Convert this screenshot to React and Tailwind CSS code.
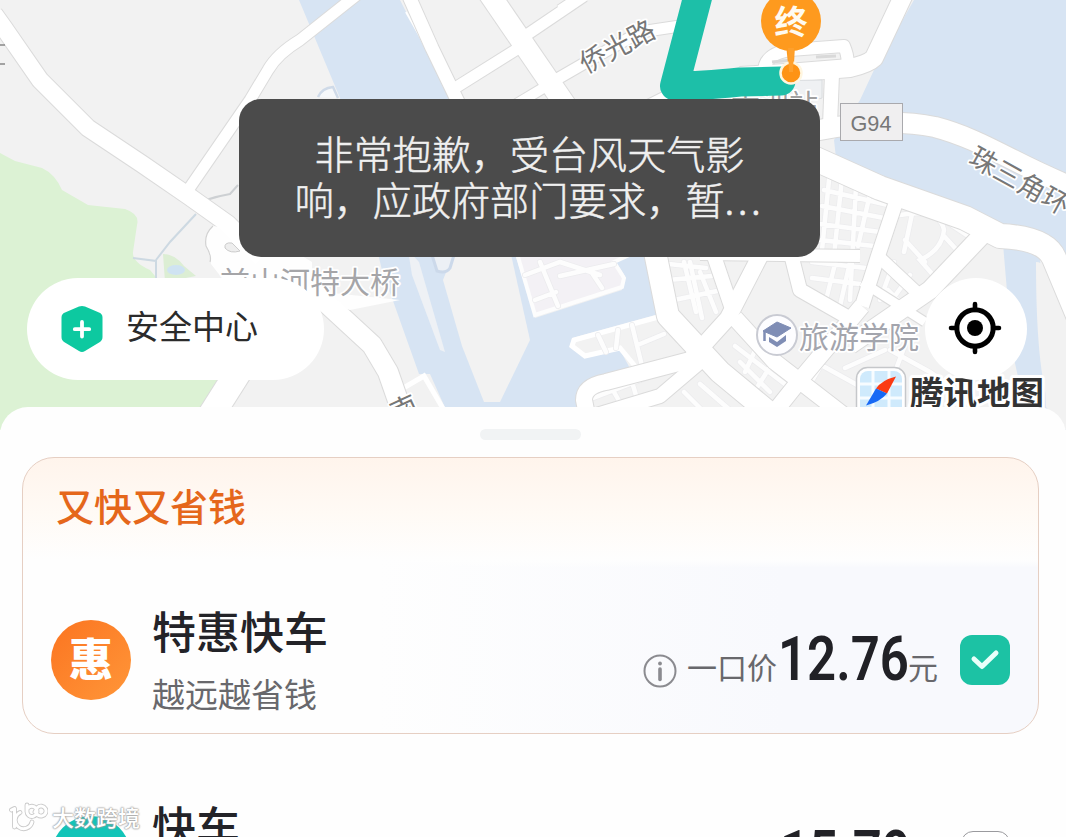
import React from "react";

const ROADS = [
  // [path, width]
  ["M-6 14 L4 28 L40 80 L88 128 L142 164 L190 197 L228 224 L262 258", 17],
  ["M358 -6 L300 40 Q277 54 268 70 L250 100 L184 196", 11],
  ["M308 286 L372 345 L388 372 L402 412", 20],
  ["M246 360 L208 420", 26],
  ["M408 -6 L432 48 L462 110", 13],
  ["M488 -8 L566 106", 21],
  ["M522 38 L584 -4", 11],
  ["M455 88 L522 46", 11],
  ["M545 86 L590 60 L640 32 L680 26", 11],
  ["M510 108 L550 84", 10],
  ["M560 10 L584 -6", 10],
  ["M640 110 L700 80", 12],
  ["M906 -10 L874 58 Q868 64 850 68 L800 72 L740 76", 18],
  ["M764 72 Q764 54 790 50 L844 46 Q850 60 846 70", 12],
  ["M832 74 L830 125", 14],
  ["M800 134 Q880 116 935 127 C985 140 1020 168 1080 190", 20],
  ["M800 152 L880 188 L965 218 L1000 236 Q1045 238 1054 258 L1080 320", 24],
  ["M898 196 L878 256 L862 306", 14],
  ["M655 252 L668 316 L720 372 L790 430", 22],
  ["M590 430 L584 400 Q584 386 606 382 L690 360 L728 318 L760 256", 16],
  ["M700 362 L660 396 L580 420", 14],
  ["M712 250 L733 312", 14],
  ["M700 254 L860 256", 12],
  ["M862 306 L800 380 L760 430", 16],
  ["M878 256 L925 300", 12],
  ["M862 282 L925 322", 9],
  ["M985 232 L930 290 L850 345", 18],
  ["M790 250 L800 290 L856 322", 14],
  ["M735 318 L775 362 L850 420", 16],
];

const MINOR = [
  "M650 262 L706 268 M668 280 L712 276 M674 300 L722 290 M690 262 L702 318 M684 262 L696 312 M700 272 L716 312",
  "M540 262 L558 306 M525 275 L560 262 L600 275 M535 300 L556 292 M560 276 L614 264 M590 270 L602 288",
  "M598 335 L606 352 M618 330 L616 348 M632 325 L642 366 M640 344 L664 334",
  "M588 400 L672 368 M614 392 L622 406 M632 382 L638 402 M684 392 L700 408 M700 384 L730 410",
  "M830 170 L822 250 M842 178 L834 256 M856 186 L850 300 M870 194 L858 246 M824 190 L888 205 M822 206 L884 218 M820 224 L880 232 M820 240 L874 246 M812 262 L866 268 M812 278 L860 284 M826 300 L836 260 M840 306 L850 262",
  "M900 215 Q940 208 944 230 Q942 250 920 260 L934 276 M912 214 L904 252 M938 216 L968 236 M944 236 L955 248 M905 240 L925 262",
  "M894 262 L880 300 M910 275 L892 300 M888 290 L908 310 M880 318 L910 306",
  "M735 346 L790 388 M740 362 L770 392 M760 340 L745 372 M778 354 L758 386 M812 360 L870 392 M830 350 L810 384 M845 368 L885 350 M890 350 L930 372 L960 392 M905 345 L895 372",
];

function MapArt() {
  return (
    <svg
      className="absolute left-0 top-0"
      width="1066"
      height="430"
      viewBox="0 0 1066 430"
      fontFamily="'Noto Sans CJK SC', sans-serif"
    >
      <rect width="1066" height="430" fill="#f2f2f2" />
      {/* park */}
      <path
        d="M0 153 L15 161 L42 168 Q55 174 62 190 L88 205 L125 209 Q140 214 137 225 L133 252 Q132 262 150 270 L225 360 L198 430 L0 430Z"
        fill="#dcf2d4"
      />
      <path d="M163 254 Q175 254 184 266 L196 276 L165 282Z" fill="#dceed4" />
      <ellipse cx="176" cy="270" rx="9" ry="5" fill="#cfe3f2" />
      <path
        d="M196 214 L170 242 L156 260 M133 258 L156 261 L156 280"
        fill="none"
        stroke="#cdd9e2"
        strokeWidth="2"
      />
      {/* water */}
      <path
        d="M299 0 L400 0 L450 98 L512 257 L530 340 L500 402 L484 402 L443 280 L452 257 L512 257 L516 257 L535 318 L622 290 L625 276 L616 262 L645 250 L659 314 L572 338 L570 346 L584 358 L620 350 L632 372 L600 376 L580 386 L576 412 L447 412 L430 374 L419 374 L382 270 L340 98Z"
        fill="#d7e4f3"
      />
      <path d="M443 280 L455 250 L510 250 L530 340 L500 402 L484 402 L462 346Z" fill="#f2f2f2" />
      <path d="M408 250 L419 262 L445 352 L440 350 L412 275Z" fill="#eef1f5" />
      <path d="M432 255 L437 271 Q446 274 450 268 L454 255" fill="#ecf0f5" stroke="#ccd9ea" strokeWidth="3" />
      <path d="M516 250 L535 315 L622 287 L624 278 L614 262 L640 250Z" fill="#f3f1f5" stroke="#fdfdfd" strokeWidth="4" />
      <path d="M662 316 L574 340 L572 346 L585 356 L620 348 L640 372 L700 355Z" fill="#f2f2f2" stroke="#fff" strokeWidth="5" />
      <path d="M400 390 L424 376 L445 412" fill="#f2f2f2" stroke="#fff" strokeWidth="5" />
      <path d="M914 0 L1066 0 L1066 275 L1000 228 L836 158 L834 140 L860 100 L874 70Z" fill="#d7e4f3" />
      <path d="M1003 244 L1040 256 L1046 407 L1066 430 L1030 430 L1012 350Z" fill="#d7e4f3" />
      <path d="M1036 262 Q1046 262 1052 280 L1070 340 L1070 430 L1050 408 Q1036 370 1036 262Z" fill="#f2f2f2" />
      <path d="M318 97 Q322 88 333 87 L338 98" fill="#f6f8fa" stroke="#cfdae8" strokeWidth="2.5" />
      <path d="M406 12 L429 52" stroke="#fff" strokeWidth="2" />
      <path d="M206 200 Q218 196 230 194 L238 185" fill="none" stroke="#cdd0d3" strokeWidth="2" />

      <path d={MINOR.join(" ")} fill="none" stroke="#ececee" strokeWidth="6" strokeLinecap="round" />
      <path d={MINOR.join(" ")} fill="none" stroke="#fdfdfd" strokeWidth="4.5" strokeLinecap="round" />

      <g fill="none" stroke="#dbdbdb" strokeLinejoin="round">
        {ROADS.map(([d, w], i) => (
          <path key={i} d={d} strokeWidth={w + 2} />
        ))}
      </g>
      {/* interchange by the bridge */}
      <path d="M213 226 Q204 234 206 246 Q210 256 211 264 L225 282 L400 300 L350 310 L312 300 L312 262 L262 232Z" fill="#fefefe" />
      <path d="M213 226 Q204 234 206 246 Q212 256 210 262" fill="none" stroke="#d2d2d2" strokeWidth="1.2" />
      <g fill="none" stroke="#fff" strokeLinejoin="round">
        {ROADS.map(([d, w], i) => (
          <path key={i} d={d} strokeWidth={w} />
        ))}
      </g>
      <path d="M225 248 Q224 242 232 243 L240 251 Q230 254 225 248Z" fill="#eee" stroke="#ccc" />
      <path d="M772 62 L792 60 M816 57 L836 56" stroke="#d9d9d9" strokeWidth="3" />
      <path d="M700 82 L822 80 L822 98 L800 104" fill="#eff1f3" stroke="#d9dcdf" />

      {/* place labels */}
      <g stroke="#fff" strokeWidth="3.5" paintOrder="stroke" strokeLinejoin="round">
        <text x="220" y="293" fontSize="30" fill="#a5a5a8">前山河特大桥</text>
        <text x="799" y="348" fontSize="30" fill="#a3a5ad">旅游学院</text>
        <text x="731" y="116" fontSize="29" fill="#a0a0a0">香洲站</text>
        <text fontSize="27" fill="#777" transform="translate(586 74) rotate(-28)">侨光路</text>
        <text fontSize="27.500" fill="#777" transform="translate(967 163) rotate(29)">珠三角环</text>
        <text fontSize="27" fill="#777" transform="translate(396 423) rotate(-25)">南</text>
      </g>
      <path d="M0 45 H5 M0 64 H5" stroke="#888" strokeWidth="1.5" />

      {/* motorway shield */}
      <rect x="840.5" y="103.5" width="62" height="37" fill="#f0eff0" stroke="#a9a9ad" />
      <text x="871" y="131" fontSize="22" fill="#777" textAnchor="middle" textLength="41" lengthAdjust="spacingAndGlyphs" fontFamily="'Liberation Sans', sans-serif">
        G94
      </text>

      {/* route and destination */}
      <path d="M699 -8 L674.500 86 Q700 86 740 82 L781 81" fill="none" stroke="#1dbfa8" strokeWidth="29" strokeLinejoin="round" strokeLinecap="round" />
      <path d="M786 44 H795 L794 64 H788Z" fill="#fe9a1e" />
      <circle cx="791" cy="21" r="30" fill="#fe9a1e" />
      <circle cx="791" cy="73" r="10.500" fill="#fe9314" stroke="#fff6e0" strokeWidth="2.500" />
      <path d="M788 48 H794 L793 72 H789Z" fill="#fea02c" />
      <text x="791" y="34" fontSize="33" fontWeight="700" fill="#fffaf0" textAnchor="middle">终</text>

      {/* college marker */}
      <circle cx="777" cy="335" r="20" fill="#fdfdff" stroke="#c9cbd3" strokeWidth="2" />
      <path d="M777 322 L791 328 L777 337 L763 331Z" fill="#7f8db5" stroke="#7f8db5" strokeLinejoin="round" />
      <path d="M769 337 L777 342 L786 335 V341 L777 347 L769 342Z" fill="#7f8db5" />
      <path d="M764.500 331 V341" stroke="#7f8db5" strokeWidth="2.500" />

      {/* map provider */}
      <rect x="856.500" y="367.500" width="49" height="52" rx="11" fill="#fff" stroke="#c5c7ca" strokeWidth="1.5" />
      <rect x="860" y="371" width="42" height="46" rx="8" fill="#cfeafc" />
      <path d="M860 384 H902 M860 398 H902 M873 371 V417 M889 371 V417" stroke="#f7fcff" strokeWidth="3" />
      <path d="M896 376.500 L887 393.500 L876 388.500 Q882 380 896 376.500Z" fill="#fb3a12" />
      <path d="M866 405.500 L876 388.500 L887 393.500 Q880 402 866 405.500Z" fill="#1769f5" />
      <text x="910" y="405" fontSize="33.500" fontWeight="700" fill="#333" stroke="#fff" strokeWidth="6" paintOrder="stroke" strokeLinejoin="round">
        腾讯地图
      </text>
    </svg>
  );
}

function Shield() {
  return (
    <svg width="44" height="50" viewBox="0 0 44 50" className="-mt-px shrink-0">
      <path d="M19 2.600 Q22 1.200 25 2.600 L39 8.600 Q42.500 10 42.500 13.500 V33 Q42.500 36.500 39.500 38.200 L25 47 Q22 48.800 19 47 L4.500 38.200 Q1.500 36.500 1.500 33 V13.500 Q1.500 10 5 8.600Z" fill="#0dc9a0" />
      <path d="M22 18 V32.500 M14.800 25.200 H29.200" stroke="#fff" strokeWidth="3.800" strokeLinecap="round" />
    </svg>
  );
}

function Locate() {
  return (
    <svg width="54" height="54" viewBox="0 0 54 54" className="-mt-[3px] -ml-0.5">
      <circle cx="27" cy="27" r="18.200" fill="none" stroke="#000" strokeWidth="5" />
      <circle cx="27" cy="27" r="8" fill="#000" />
      <path d="M27 3 V9 M27 45 V51 M3 27 H9 M45 27 H51" stroke="#000" strokeWidth="4.600" strokeLinecap="round" />
    </svg>
  );
}

function Info() {
  return (
    <svg width="34" height="34" viewBox="0 0 34 34" className="mt-[21px] shrink-0">
      <circle cx="17" cy="17" r="15.500" fill="none" stroke="#8b8b90" strokeWidth="2" />
      <path d="M17 15 V25.500" stroke="#8b8b90" strokeWidth="3.600" strokeLinecap="round" />
      <circle cx="17" cy="9.500" r="1.900" fill="#8b8b90" />
    </svg>
  );
}

function Price({ children }) {
  return (
    <span className="block h-[60px] w-[130px] shrink-0 whitespace-nowrap">
      <span className="block origin-left scale-x-[0.835] font-[Roboto,sans-serif] text-[61px] leading-[58px] font-semibold text-[#212126]">
        {children}
      </span>
    </span>
  );
}

const WATERMARK_LOGO =
  "M3.500 8 L6.500 6.500 V25 M24 20 A8.500 8.500 0 1 1 12 10.500 M19 3 V9 A5 5 0 1 0 28 6.500 A5 5 0 0 0 20 6 M28 9 A5 5 0 1 0 29.500 5.500 L27 10";

function Watermark() {
  return (
    <div className="absolute left-[8px] top-[800px] flex h-9 items-center gap-1">
      <svg width="40" height="32" viewBox="0 0 40 32" fill="none" strokeLinecap="round" strokeLinejoin="round">
        <path d={WATERMARK_LOGO} stroke="#cbcbcb" strokeWidth="4.800" />
        <path d={WATERMARK_LOGO} stroke="#fff" strokeWidth="3" />
      </svg>
      <span className="-mt-1 text-[22px] leading-8 font-medium text-white [text-shadow:0_0_2px_#999,0_0_2px_#aaa,0_0_1px_#999]">
        大数跨境
      </span>
    </div>
  );
}

export default function App() {
  return (
    <div className="relative flex h-[837px] w-[1066px] flex-col overflow-hidden bg-white font-['Noto_Sans_CJK_SC',sans-serif]">
      <header className="relative h-[407px] shrink-0">
        <MapArt />
        <div className="relative flex h-full flex-col">
          <div className="mt-[99px] ml-[239px] flex h-[158px] w-[581px] flex-col items-center justify-center rounded-[22px] bg-[#4b4b4b] pb-[6px] text-[39.1px] leading-[46px] font-light text-[#f0f0f0] [-webkit-text-stroke:0.5px_#f0f0f0]">
            <p className="whitespace-nowrap">非常抱歉，受台风天气影</p>
            <p className="whitespace-nowrap">
              响，应政府部门要求，暂<span className="tracking-[3.500px]">...</span>
            </p>
          </div>
          <div className="mt-[21px] flex items-start justify-between pr-[39px] pl-[27px]">
            <button className="flex h-[102px] w-[297px] items-center rounded-full bg-white pl-[33px] text-left">
              <Shield />
              <span className="-mt-[8px] ml-[22px] text-[33px] leading-[48px] text-[#2b2b2b]">安全中心</span>
            </button>
            <button className="flex size-[102px] items-center justify-center rounded-full bg-white">
              <Locate />
            </button>
          </div>
        </div>
      </header>

      <main className="relative flex h-[430px] shrink-0 flex-col rounded-t-[28px] bg-[#fefefe]">
        <div className="mx-auto mt-[22px] h-[11px] w-[101px] shrink-0 -translate-x-[3px] rounded-full bg-[#f1f3f4]" />
        <section className="mt-[17px] ml-[22px] flex h-[277px] w-[1017px] shrink-0 flex-col rounded-[32px] border border-[#e6cfc3] bg-[linear-gradient(180deg,#fff4ec_0%,#fffaf5_20%,#fefefe_37%,#ffffff00_40%),linear-gradient(90deg,#fefefe_35%,#f8f9fd_75%)]">
          <h2 className="mt-[19px] ml-[33px] text-[38px] leading-[56px] font-medium text-[#e5671b]">又快又省钱</h2>
          <div className="mt-[65px] flex h-[124px] items-center pr-[28px] pl-[28px]">
            <span className="flex size-20 items-center justify-center rounded-full bg-linear-to-br from-[#fb7420] to-[#ff9638] pb-1.5 text-[44px] leading-none font-black text-white">
              惠
            </span>
            <div className="mt-[4px] ml-[21px] flex flex-col">
              <span className="text-[44px] leading-[62px] font-medium text-[#232328]">特惠快车</span>
              <span className="mt-px text-[33px] leading-[63px] text-[#68686c]">越远越省钱</span>
            </div>
            <div className="ml-auto flex items-center">
              <Info />
              <span className="mt-[12px] mr-px ml-[10px] text-[30px] text-[#68686c]">一口价</span>
              <Price>12.76</Price>
              <span className="mt-[12px] text-[30px] text-[#68686c]">元</span>
              <span className="ml-[22px] flex size-[50px] items-center justify-center rounded-[12px] bg-[#1cc2a4]">
                <svg width="30" height="24" viewBox="0 0 30 24">
                  <path d="M4 11 L12 18.500 L26 5" fill="none" stroke="#e9fffa" strokeWidth="5" strokeLinecap="round" strokeLinejoin="round" />
                </svg>
              </span>
            </div>
          </div>
        </section>
        <section className="mt-[64px] flex h-[120px] shrink-0 items-start pr-[56px] pl-[51px]">
          <span className="mt-[18px] flex size-20 items-center justify-center rounded-full bg-[#12c4b8] text-[40px] leading-none font-bold text-[#e4fffb]">
            快
          </span>
          <span className="ml-[21px] text-[44px] leading-[54px] font-medium text-[#232328]">快车</span>
          <div className="ml-auto flex items-start">
            <div className="mt-[26px]">
              <Price>15.79</Price>
            </div>
            <span className="mt-[33px] ml-[51px] size-[49px] rounded-[12px] border-[1.500px] border-[#9a9a9e] bg-white" />
          </div>
        </section>
      </main>
      <Watermark />
    </div>
  );
}
